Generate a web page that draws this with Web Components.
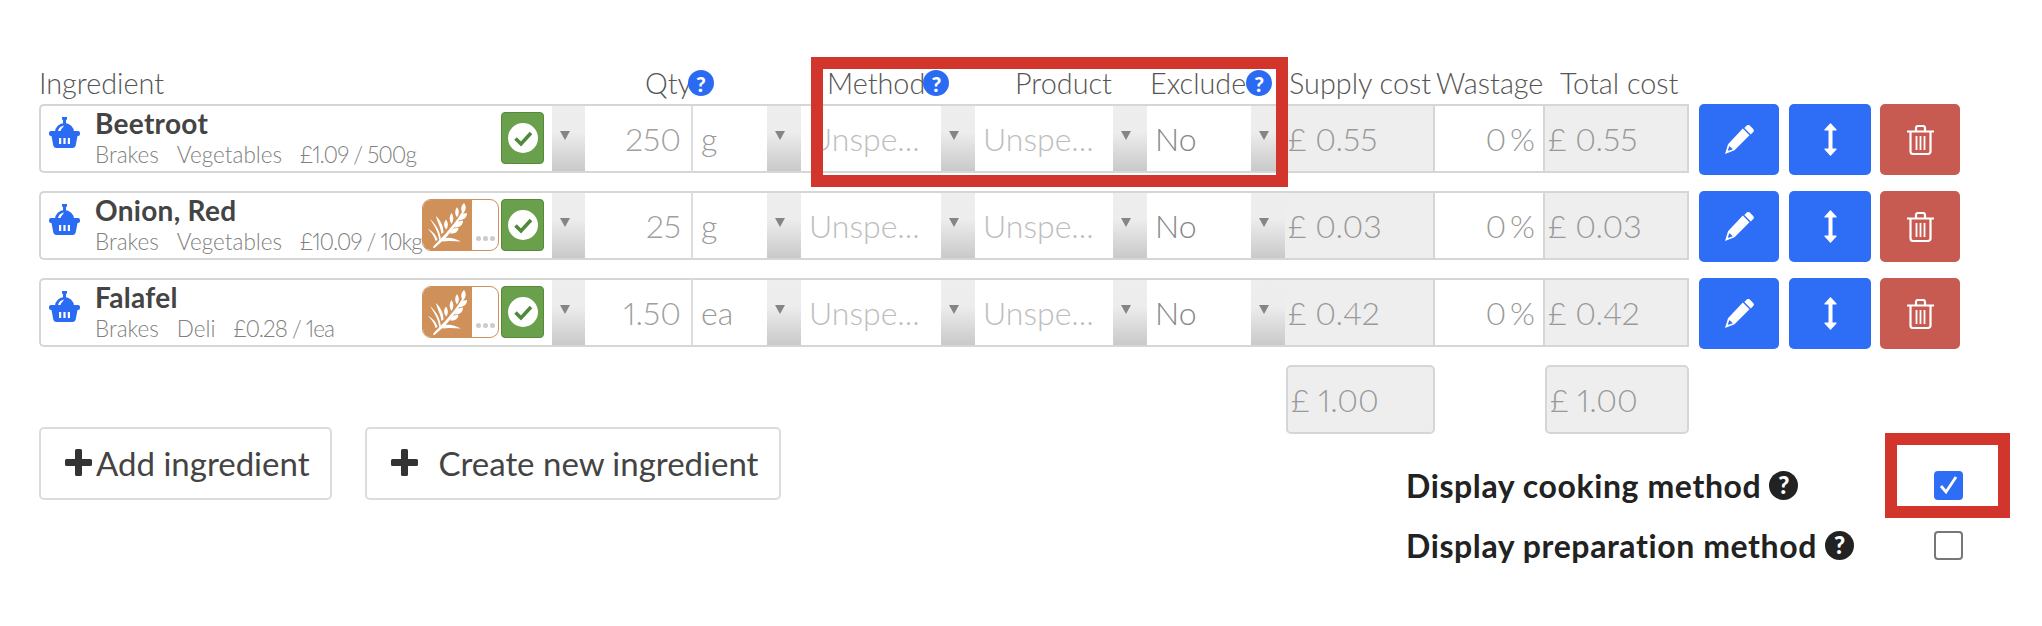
<!DOCTYPE html>
<html>
<head>
<meta charset="utf-8">
<title>Ingredients</title>
<style>
  html, body { margin: 0; background: #fff; }
  body { font-family: "Lato", "Liberation Sans", sans-serif; }
</style>
</head>
<body>
<recipe-page>
  <table-head></table-head>
  <ingredient-row name="Beetroot" qty="250" unit="g" supply="0.55" total="0.55">
    <span>Brakes</span><span>Vegetables</span><span>£1.09 / 500g</span>
  </ingredient-row>
  <ingredient-row name="Onion, Red" qty="25" unit="g" supply="0.03" total="0.03" allergen>
    <span>Brakes</span><span>Vegetables</span><span>£10.09 / 10kg</span>
  </ingredient-row>
  <ingredient-row name="Falafel" qty="1.50" unit="ea" supply="0.42" total="0.42" allergen>
    <span>Brakes</span><span>Deli</span><span>£0.28 / 1ea</span>
  </ingredient-row>
  <table-foot></table-foot>
  <red-mark style="left:811px;top:57px;width:477px;height:130px"></red-mark>
  <red-mark style="left:1885px;top:433px;width:125px;height:85px"></red-mark>
</recipe-page>

<script>
const ICONS = {
  basket: `<svg width="31" height="31" viewBox="0 0 31 31"><g fill="#2b6bf3"><path d="M13 0h5v2.500l-1 .5v5h-3V3l-1-.5z"/><path d="M6 15a9.500 9 0 0 1 19 0z"/><rect y="14" width="31" height="5" rx="2"/><path d="M2.500 19h26l-1.800 9.500a3 3 0 0 1-3 2.500H7.300a3 3 0 0 1-3-2.500z"/></g><path fill="#fff" d="M9 14c.5-3 3-5 6-5.500-1 2-3 3.500-3.500 5.500zM10 21h2.200v6H10zM14.400 21h2.200v6h-2.200zM18.800 21H21v6h-2.200z"/></svg>`,
  wheat: `<svg width="40" height="45" viewBox="0 0 40 45"><g fill="#fff"><path d="M5 44c4-5 8-8 14-15 5-6 11-13 15-20l1.500 1c-4 8-9 15-14.500 21-6 7-10 10-15 14.400z"/><path d="M36 0c2.500 3 2.500 7-1 10.500-2.500-3.500-2.500-7.500 1-10.500zM39 10c0 4.500-3 7-8 7 .5-4 3.500-7 8-7zM29 4c2.500 3.500 2.500 7 0 10.500-2.500-3.500-2.500-7 0-10.500zM35 17.500c0 4.500-3 7-8 7 .5-4 3.500-7 8-7zM23.500 10c2.500 3.500 2.500 7.500 0 11-2.500-3.500-2.500-7.500 0-11zM30.500 25c-.5 4-3.500 6-8.500 5.500 1-4 4-6 8.500-5.500zM18 16.500c2.500 3.500 2.500 7 .3 10-2.800-3-2.800-7-.3-10z"/><path d="M2 16c3.500 6 8 12 9 20l2 3c0-10-4.500-17-11-23zM8 13c1 6 4.500 10.500 5.500 18l2-1.500C15.500 23 12.500 17.500 8 13zM0 26c3 3 6.500 7 7.500 12l2-1C8.500 32.500 4.500 28 0 26zM13 36c6-2.500 13-1.500 20 2.500-7-.5-13-1-18.500 0z"/></g></svg>`,
  check: `<svg width="30" height="30" viewBox="0 0 30 30"><circle cx="15" cy="15" r="15" fill="#fff"/><path d="M7.500 15.500l5.500 5.500 10-11" fill="none" stroke="#4f8a3c" stroke-width="3.600"/></svg>`,
  pencil: `<svg width="29" height="29" viewBox="0 0 29 29"><path fill="#fff" d="M21.500.8a2.500 2.500 0 0 1 3.500 0l3 3a2.500 2.500 0 0 1 0 3.500l-2.200 2.200-6.500-6.500zM17.800 3.500l6.700 6.700L9.500 25.200 0 29l3-9.800z"/><path fill="#2e6df6" d="M4.500 21l3.300 3.300-4.200 1.500-.7-.7z"/></svg>`,
  resize: `<svg width="13" height="33" viewBox="0 0 13 33"><path fill="#fff" d="M6.500 0l6 6.500a.6.6 0 0 1-.5 1H8.500v18H12a.6.6 0 0 1 .5 1l-6 6.500-6-6.500a.6.6 0 0 1 .5-1h3.500v-18H1a.6.6 0 0 1-.5-1z"/></svg>`,
  trash: `<svg width="27" height="30" viewBox="0 0 27 30"><g fill="none" stroke="#fff" stroke-width="2.200"><path d="M0 6.500h27M9 6V3a2 2 0 0 1 2-2h5a2 2 0 0 1 2 2v3M3.500 6.500v20a2.500 2.500 0 0 0 2.500 2.500h15a2.500 2.500 0 0 0 2.500-2.500v-20"/><path d="M9.500 11v14M13.500 11v14M17.500 11v14" stroke-width="1.800"/></g></svg>`,
  plus: `<svg width="27" height="27" viewBox="0 0 27 27"><path fill="#333" d="M10 1.500A1.500 1.500 0 0 1 11.500 0h4A1.500 1.500 0 0 1 17 1.500V10h8.500a1.500 1.500 0 0 1 1.500 1.500v4a1.500 1.500 0 0 1-1.500 1.500H17v8.500a1.500 1.500 0 0 1-1.500 1.500h-4a1.500 1.500 0 0 1-1.500-1.500V17H1.500A1.500 1.500 0 0 1 0 15.500v-4A1.500 1.500 0 0 1 1.500 10H10z"/></svg>`
};

const COLS = '546px 108px 108px 174px 172px 138px 150px 108px 146px';

class RecipePage extends HTMLElement {
  constructor() {
    super();
    this.attachShadow({ mode: 'open' }).innerHTML = `
      <style>
        :host {
          display: block; position: relative; box-sizing: border-box;
          width: 2042px; height: 626px; padding: 64px 0 0 39px;
          font-family: "Lato", "Liberation Sans", sans-serif;
          font-variant-numeric: proportional-nums;
          --cols: ${COLS};
          --line: #d6d6d6;
        }
      </style>
      <slot></slot>`;
  }
}

class HelpDot extends HTMLElement {
  constructor() {
    super();
    this.attachShadow({ mode: 'open' }).innerHTML = `
      <style>
        :host {
          display: inline-flex; align-items: center; justify-content: center;
          width: var(--dot, 26px); height: var(--dot, 26px); border-radius: 50%;
          background: var(--dot-bg, #2b6bf3); color: #fff; letter-spacing: 0;
          font: 900 var(--dot-font, 21px)/1 "Lato", sans-serif;
          flex: none;
        }
      </style>?`;
  }
}

class TableHead extends HTMLElement {
  constructor() {
    super();
    this.attachShadow({ mode: 'open' }).innerHTML = `
      <style>
        :host {
          display: grid; grid-template-columns: var(--cols); height: 40px;
          font-size: 28.800px; font-weight: 300; color: #555; white-space: nowrap;
        }
        div { display: flex; align-items: center; height: 38px; }
        .qty { grid-column: span 2; padding-left: 60px; }
        .qty help-dot { margin-left: -4px; }
      </style>
      <div>Ingredient</div>
      <div class="qty">Qty<help-dot></help-dot></div>
      <div style="padding-left:26px">Method<help-dot style="margin-left:-2px"></help-dot></div>
      <div style="padding-left:40px">Product</div>
      <div style="padding-left:3px">Exclude<help-dot></help-dot></div>
      <div style="padding-left:4px">Supply cost</div>
      <div style="padding-left:1px">Wastage</div>
      <div style="padding-left:17px">Total cost</div>`;
  }
}

class PickField extends HTMLElement {
  constructor() {
    super();
    const tone = this.getAttribute('tone') || '#bdbdbd';
    this.attachShadow({ mode: 'open' }).innerHTML = `
      <style>
        :host {
          display: flex; box-sizing: border-box; height: 69px; min-width: 0;
          border-block: 2px solid var(--line); background: #fff;
        }
        .val {
          flex: 1; padding-left: 8px; font-size: 32px; font-weight: 300; line-height: 65px;
          color: ${tone}; white-space: nowrap; overflow: hidden;
        }
        drop-arrow { width: 34px; }
      </style>
      <div class="val">${this.getAttribute('text')}</div>
      <drop-arrow></drop-arrow>`;
  }
}

class DropArrow extends HTMLElement {
  constructor() {
    super();
    this.attachShadow({ mode: 'open' }).innerHTML = `
      <style>
        :host {
          display: block; flex: none; width: 33px; position: relative;
          background: linear-gradient(#eee 0, #ededed 40%, #c9c9c9 100%);
        }
        i {
          display: block; width: 0; height: 0; margin: 25px 0 0 8px;
          border: 5.500px solid transparent; border-top: 9px solid #858585; border-bottom: 0;
        }
      </style>
      <i></i>`;
  }
}

class CostField extends HTMLElement {
  constructor() {
    super();
    const right = this.hasAttribute('right');
    const lone = this.hasAttribute('lone');
    this.attachShadow({ mode: 'open' }).innerHTML = `
      <style>
        :host {
          display: flex; align-items: center; box-sizing: border-box; height: 69px;
          border: 2px solid var(--line); border-left-width: ${this.hasAttribute('open') ? 0 : 2}px;
          background: ${right ? '#fff' : '#eee'};
          ${right ? 'justify-content: flex-end; padding-right: 8px; border-left: 0; border-right: 0; word-spacing: -5px;' : 'padding-left: 3px;'}
          ${lone ? 'border-radius: 5px;' : ''}
          font-size: 32px; font-weight: 300; color: #999; white-space: nowrap;
        }
      </style>
      <slot></slot>`;
  }
}

class AllergenBadge extends HTMLElement {
  constructor() {
    super();
    this.attachShadow({ mode: 'open' }).innerHTML = `
      <style>
        :host {
          display: flex; box-sizing: border-box; width: 77px; height: 52px;
          border: 1.500px solid #cf9059; border-radius: 9px; overflow: hidden; background: #fff;
        }
        .wheat {
          width: 49px; background: #cf9059; display: flex;
          align-items: center; justify-content: center;
        }
        .more {
          flex: 1; display: flex; gap: 2px; align-items: flex-end; justify-content: center;
          padding-bottom: 9px;
        }
        .more i { width: 5px; height: 5px; border-radius: 50%; background: #ccc; }
      </style>
      <div class="wheat">${ICONS.wheat}</div>
      <div class="more"><i></i><i></i><i></i></div>`;
  }
}

class StatusBadge extends HTMLElement {
  constructor() {
    super();
    this.attachShadow({ mode: 'open' }).innerHTML = `
      <style>
        :host {
          display: flex; align-items: center; justify-content: center; box-sizing: border-box;
          width: 43px; height: 52px; border-radius: 4px;
          background: #6a9f4b; border: 1px solid #558a3a;
        }
      </style>
      ${ICONS.check}`;
  }
}

class IngredientCell extends HTMLElement {
  constructor() {
    super();
    const withAllergen = this.hasAttribute('allergen');
    this.attachShadow({ mode: 'open' }).innerHTML = `
      <style>
        :host {
          display: flex; box-sizing: border-box; height: 69px; position: relative;
          border: 2px solid var(--line); border-right: 0; border-radius: 5px 0 0 5px;
        }
        .ico { flex: none; width: 54px; padding: 11px 0 0 8px; box-sizing: border-box; }
        .txt { flex: 1; min-width: 0; }
        .name {
          font-size: 28px; font-weight: 700; color: #444; line-height: 30px; margin-top: 2px;
          letter-spacing: .3px; white-space: nowrap;
        }
        .meta {
          display: flex; gap: 18px; margin-top: 4px; line-height: 26px;
          font-size: 22.500px; font-weight: 300; color: #808080; white-space: nowrap;
        }
        ::slotted(span:last-child) { letter-spacing: -1px; }
        .tags { flex: none; display: flex; gap: 2px; padding-top: 6px; margin-right: 8px; }
      </style>
      <div class="ico">${ICONS.basket}</div>
      <div class="txt">
        <div class="name">${this.getAttribute('name')}</div>
        <div class="meta"><slot></slot></div>
      </div>
      <div class="tags">
        ${withAllergen ? '<allergen-badge></allergen-badge>' : ''}
        <status-badge></status-badge>
      </div>
      <drop-arrow></drop-arrow>`;
  }
}

class ActionButton extends HTMLElement {
  constructor() {
    super();
    const kind = this.getAttribute('kind');
    this.attachShadow({ mode: 'open' }).innerHTML = `
      <style>
        :host {
          display: flex; align-items: center; justify-content: center; height: 71px;
          border-radius: 5px; flex: none;
          background: ${kind === 'trash' ? '#c75b52' : '#2e6df6'};
        }
      </style>
      ${ICONS[kind]}`;
  }
}

class IngredientRow extends HTMLElement {
  constructor() {
    super();
    const a = n => this.getAttribute(n);
    const allergen = this.hasAttribute('allergen') ? 'allergen' : '';
    this.attachShadow({ mode: 'open' }).innerHTML = `
      <style>
        :host { display: flex; margin-bottom: 16px; align-items: flex-start; }
        .cells { display: grid; grid-template-columns: var(--cols); }
        .qty {
          display: flex; align-items: center; justify-content: flex-end; box-sizing: border-box;
          height: 69px; padding-right: 10px; border-block: 2px solid var(--line);
          border-right: 2px solid #ddd; font-size: 32px; font-weight: 300; color: #a0a0a0;
        }
        .btns { display: flex; margin-left: 10px; }
      </style>
      <div class="cells">
        <ingredient-cell name="${a('name')}" ${allergen}><slot></slot></ingredient-cell>
        <div class="qty">${a('qty')}</div>
        <pick-field text="${a('unit')}" tone="#999"></pick-field>
        <pick-field text="Unspe..."></pick-field>
        <pick-field text="Unspe..."></pick-field>
        <pick-field text="No" tone="#888"></pick-field>
        <cost-field open>£ ${a('supply')}</cost-field>
        <cost-field right>0 %</cost-field>
        <cost-field>£ ${a('total')}</cost-field>
      </div>
      <div class="btns">
        <action-button kind="pencil" style="width:80px"></action-button>
        <action-button kind="resize" style="width:82px;margin-left:10px"></action-button>
        <action-button kind="trash" style="width:80px;margin-left:9px"></action-button>
      </div>`;
  }
}

class AddButton extends HTMLElement {
  constructor() {
    super();
    this.attachShadow({ mode: 'open' }).innerHTML = `
      <style>
        :host {
          display: inline-flex; align-items: center; box-sizing: border-box; height: 73px;
          border: 2px solid #dcdcdc; border-radius: 5px; background: #fff;
          font-size: 33px; color: #444; white-space: nowrap; padding-bottom: 2px;
        }
      </style>
      <slot></slot>`;
  }
}

class OptionCheck extends HTMLElement {
  constructor() {
    super();
    const on = this.hasAttribute('checked');
    this.attachShadow({ mode: 'open' }).innerHTML = `
      <style>
        :host {
          display: grid; grid-template-columns: 528px 29px; align-items: center; height: 60px;
          font-size: 32px; font-weight: 700; color: #222; white-space: nowrap; letter-spacing: .6px;
          --dot: 29px; --dot-bg: #222; --dot-font: 24px;
        }
        .lbl { display: flex; align-items: center; gap: 8px; }
        .box {
          box-sizing: border-box; width: 29px; height: 29px; border-radius: 4px;
          display: flex; align-items: center; justify-content: center;
          ${on ? 'background: #2e6df6;' : 'border: 2px solid #777; background: #fff;'}
        }
      </style>
      <div class="lbl"><slot></slot><help-dot></help-dot></div>
      <div class="box">${on ? '<svg width="19" height="20" viewBox="0 0 19 20"><path d="M2 11l5 6L17 2" fill="none" stroke="#fff" stroke-width="2.800"/></svg>' : ''}</div>`;
  }
}

class TableFoot extends HTMLElement {
  constructor() {
    super();
    this.attachShadow({ mode: 'open' }).innerHTML = `
      <style>
        :host { display: flex; }
        .left { width: 1247px; display: flex; gap: 33px; padding-top: 62px; align-items: flex-start; }
        .sums { display: flex; gap: 110px; }
        .opts { margin: 21px 0 0 120px; }
        .add { padding: 0 21px 2px 24px; gap: 4px; }
        .new { padding: 0 21px 2px 24px; gap: 20px; }
      </style>
      <div class="left">
        <add-button class="add">${ICONS.plus}Add ingredient</add-button>
        <add-button class="new">${ICONS.plus}Create new ingredient</add-button>
      </div>
      <div>
        <div class="sums">
          <cost-field lone style="width:149px">£ 1.00</cost-field>
          <cost-field lone style="width:144px">£ 1.00</cost-field>
        </div>
        <div class="opts">
          <option-check checked>Display cooking method</option-check>
          <option-check>Display preparation method</option-check>
        </div>
      </div>`;
  }
}

class RedMark extends HTMLElement {
  constructor() {
    super();
    this.attachShadow({ mode: 'open' }).innerHTML = `
      <style>
        :host {
          position: absolute; box-sizing: border-box; display: block;
          border: 12px solid #d2352b; pointer-events: none;
        }
      </style>`;
  }
}

customElements.define('drop-arrow', DropArrow);
customElements.define('help-dot', HelpDot);
customElements.define('pick-field', PickField);
customElements.define('cost-field', CostField);
customElements.define('allergen-badge', AllergenBadge);
customElements.define('status-badge', StatusBadge);
customElements.define('action-button', ActionButton);
customElements.define('add-button', AddButton);
customElements.define('option-check', OptionCheck);
customElements.define('ingredient-cell', IngredientCell);
customElements.define('ingredient-row', IngredientRow);
customElements.define('table-head', TableHead);
customElements.define('table-foot', TableFoot);
customElements.define('red-mark', RedMark);
customElements.define('recipe-page', RecipePage);
</script>
</body>
</html>
